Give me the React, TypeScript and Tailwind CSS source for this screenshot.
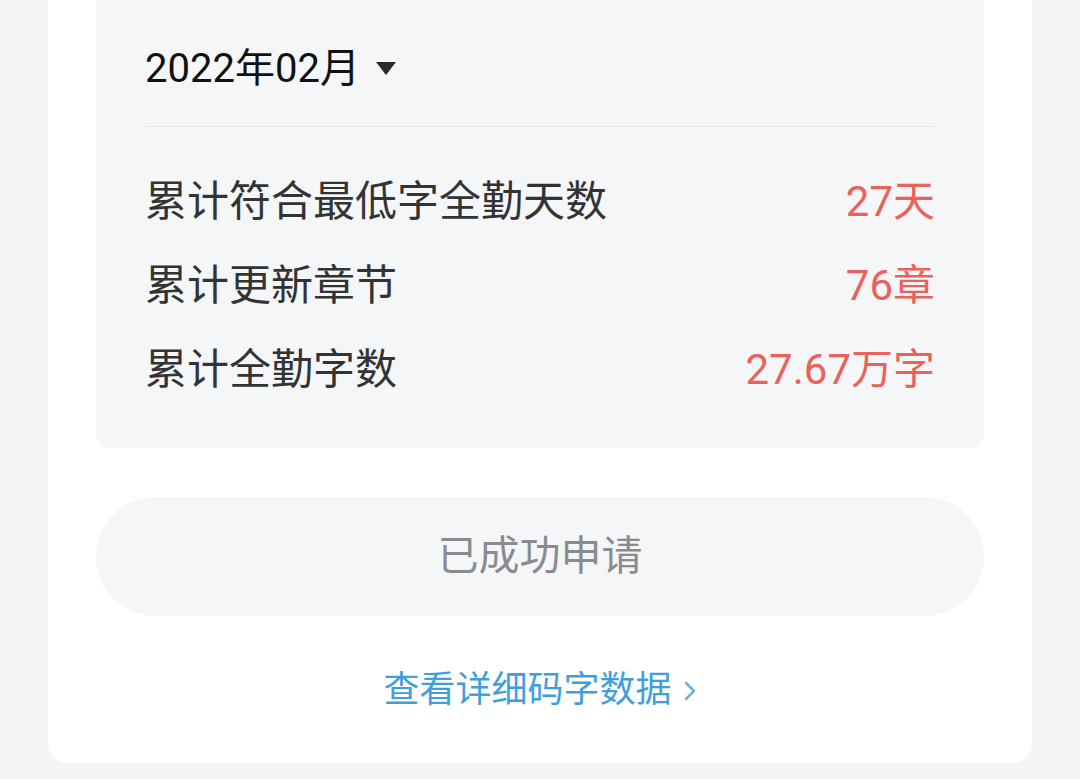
import React from "react";

const rows = [
  { label: "累计符合最低字全勤天数", value: "27天" },
  { label: "累计更新章节", value: "76章" },
  { label: "累计全勤字数", value: "27.67万字" },
];

export default function App() {
  return (
    <div
      className="w-[1080px] h-[779px] overflow-hidden bg-[#f4f5f7] px-[48px]"
      style={{ fontFamily: 'Roboto, "Noto Sans CJK SC", "Noto Sans", sans-serif' }}
    >
      <div className="bg-white rounded-b-[20px] px-[48px] pb-[49px]">
        <div className="bg-[#f5f6f8] rounded-b-[14px] px-[49px] pt-[41px] pb-[36px]">
          <div className="flex items-center h-[56px] text-[40px] text-[#111] leading-none">
            <span>2022年02月</span>
            <svg width="20" height="13" viewBox="0 0 20 13" className="ml-[16px] mt-[-2px]">
              <polygon points="0,0 20,0 10,13" fill="#2a2a2a" />
            </svg>
          </div>
          <div className="mt-[29px] border-t border-[#e6e7ea]" />
          <div className="pt-[33px]">
            {rows.map((r) => (
              <div
                key={r.label}
                className="flex justify-between items-center h-[84px] text-[42px] leading-none"
              >
                <span className="text-[#333]">{r.label}</span>
                <span className="text-[#e9625b]">{r.value}</span>
              </div>
            ))}
          </div>
        </div>
        <div className="mt-[49px] h-[119px] rounded-full bg-[#f5f6f8] flex items-center justify-center text-[41px] text-[#8a8b90] leading-none">
          已成功申请
        </div>
        <div className="mt-[50px] h-[48px] flex items-center justify-center text-[36px] text-[#3f9fdc] leading-none">
          <span>查看详细码字数据</span>
          <svg width="14" height="22" viewBox="0 0 14 22" className="ml-[11px] mt-[2px]">
            <polyline
              points="3,3 11,11 3,19"
              fill="none"
              stroke="#6cb3e3"
              strokeWidth="2.5"
              strokeLinecap="round"
              strokeLinejoin="round"
            />
          </svg>
        </div>
      </div>
    </div>
  );
}
